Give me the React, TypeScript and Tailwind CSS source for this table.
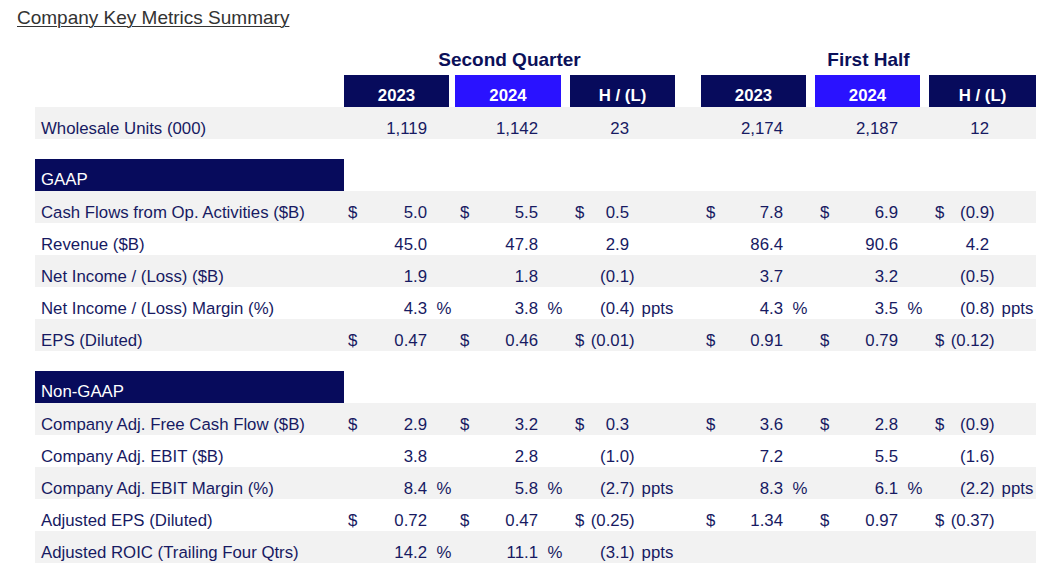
const FONT = { fontFamily: '"Liberation Sans", Arial, sans-serif' };

type Col = { cell: string; val: string; box: string; boxBg: string };

const COLS: Col[] = [
  { cell: 'w-[111px] pl-[4px]', val: 'w-[65px]', box: 'w-[105px]', boxBg: 'bg-[#070b5c]' },
  { cell: 'w-[115px] pl-[5px]', val: 'w-[64px]', box: 'w-[106px]', boxBg: 'bg-[#2a12ff]' },
  { cell: 'w-[131px] pl-[5px]', val: 'w-[40px]', box: 'w-[105px]', boxBg: 'bg-[#070b5c]' },
  { cell: 'w-[114px] pl-[5px]', val: 'w-[63px]', box: 'w-[105px]', boxBg: 'bg-[#070b5c]' },
  { cell: 'w-[114px] pl-[5px]', val: 'w-[64px]', box: 'w-[105px]', boxBg: 'bg-[#2a12ff]' },
  { cell: 'w-[107px] pl-[6px]', val: 'w-[40px]', box: 'w-[107px]', boxBg: 'bg-[#070b5c]' },
];

const HEAD = ['2023', '2024', 'H / (L)', '2023', '2024', 'H / (L)'];

type Row = { label: string; vals: (string | null)[] };

const GAAP: Row[] = [
  { label: 'Cash Flows from Op. Activities ($B)', vals: ['$5.0', '$5.5', '$0.5', '$7.8', '$6.9', '$(0.9)'] },
  { label: 'Revenue ($B)', vals: ['45.0', '47.8', '2.9', '86.4', '90.6', '4.2'] },
  { label: 'Net Income / (Loss) ($B)', vals: ['1.9', '1.8', '(0.1)', '3.7', '3.2', '(0.5)'] },
  { label: 'Net Income / (Loss) Margin (%)', vals: ['4.3 %', '3.8 %', '(0.4) ppts', '4.3 %', '3.5 %', '(0.8) ppts'] },
  { label: 'EPS (Diluted)', vals: ['$0.47', '$0.46', '$(0.01)', '$0.91', '$0.79', '$(0.12)'] },
];

const NON_GAAP: Row[] = [
  { label: 'Company Adj. Free Cash Flow ($B)', vals: ['$2.9', '$3.2', '$0.3', '$3.6', '$2.8', '$(0.9)'] },
  { label: 'Company Adj. EBIT ($B)', vals: ['3.8', '2.8', '(1.0)', '7.2', '5.5', '(1.6)'] },
  { label: 'Company Adj. EBIT Margin (%)', vals: ['8.4 %', '5.8 %', '(2.7) ppts', '8.3 %', '6.1 %', '(2.2) ppts'] },
  { label: 'Adjusted EPS (Diluted)', vals: ['$0.72', '$0.47', '$(0.25)', '$1.34', '$0.97', '$(0.37)'] },
  { label: 'Adjusted ROIC (Trailing Four Qtrs)', vals: ['14.2 %', '11.1 %', '(3.1) ppts', null, null, null] },
];

function ValueCell({ raw, col }: { raw: string | null; col: Col }) {
  if (!raw) return <div className={`shrink-0 ${col.cell}`} />;
  let v = raw;
  const dollar = v.startsWith('$');
  if (dollar) v = v.slice(1);
  let suffix = '';
  const sp = v.indexOf(' ');
  if (sp >= 0) {
    suffix = v.slice(sp + 1);
    v = v.slice(0, sp);
  }
  const neg = v.endsWith(')');
  if (neg) v = v.slice(0, -1);

  return (
    <div className={`flex shrink-0 whitespace-nowrap ${col.cell}`}>
      <span className="w-[14px] shrink-0">{dollar ? '$' : ''}</span>
      <span className={`shrink-0 text-right ${col.val}`}>{v}</span>
      <span className={neg ? '' : 'invisible'}>)</span>
      {suffix === '%' && <span className="ml-[4px]">%</span>}
      {suffix === 'ppts' && <span className="ml-[7px]">ppts</span>}
    </div>
  );
}

function DataRow({ row, gray }: { row: Row; gray: boolean }) {
  return (
    <div className={`flex h-[32px] items-end pb-[1px] leading-[19px] ${gray ? 'bg-[#f2f2f2]' : 'bg-white'}`}>
      <div className="w-[309px] shrink-0 pl-[6px]">{row.label}</div>
      {COLS.map((c, i) => (
        <ValueCell key={i} raw={row.vals[i]} col={c} />
      ))}
    </div>
  );
}

function Section({ title, rows }: { title: string; rows: Row[] }) {
  return (
    <div className="mt-[20px]">
      <div className="flex h-[32px] w-[309px] items-end bg-[#070b5c] pb-[2px] pl-[6px] leading-[19px] text-white">
        {title}
      </div>
      {rows.map((r, i) => (
        <DataRow key={r.label} row={r} gray={i % 2 === 0} />
      ))}
    </div>
  );
}

export default function App() {
  return (
    <div className="min-h-[574px] w-[1057px] bg-white pt-[7px]" style={FONT}>
      <div className="pl-[17px] text-[19px] leading-[22px] text-[#333333] underline decoration-1 underline-offset-[2px]">
        Company Key Metrics Summary
      </div>

      <div className="ml-[35px] w-[1001px] text-[16.8px] text-[#171a62]">
        <div className="mt-[20px] flex h-[22px] text-[19px] font-bold leading-[22px] text-[#0b1059]">
          <div className="w-[309px] shrink-0" />
          <div className="w-[331px] text-center">Second Quarter</div>
          <div className="w-[26px] shrink-0" />
          <div className="w-[335px] text-center">First Half</div>
        </div>

        <div className="mt-[4px] flex h-[32px]">
          <div className="w-[309px] shrink-0" />
          {COLS.map((c, i) => (
            <div key={i} className={`shrink-0 ${c.cell.split(' ')[0]}`}>
              <div
                className={`flex h-[32px] items-end justify-center pb-[2px] font-bold leading-[19px] text-white ${c.box} ${c.boxBg}`}
              >
                {HEAD[i]}
              </div>
            </div>
          ))}
        </div>

        <DataRow row={{ label: 'Wholesale Units (000)', vals: ['1,119', '1,142', '23', '2,174', '2,187', '12'] }} gray />

        <Section title="GAAP" rows={GAAP} />
        <Section title="Non-GAAP" rows={NON_GAAP} />
      </div>
    </div>
  );
}
